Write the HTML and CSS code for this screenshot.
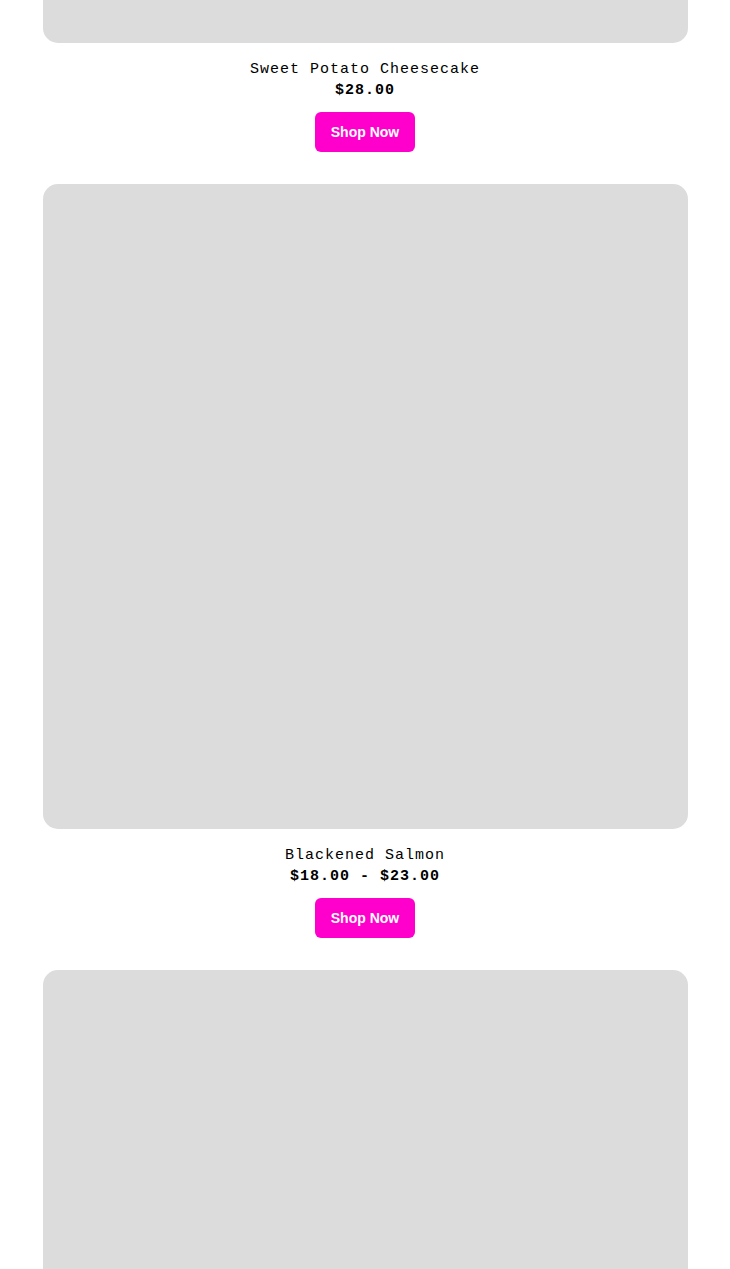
FILE: index.html
```html
<!DOCTYPE html>
<html lang="en">
<head>
  <meta charset="UTF-8">
  <meta name="viewport" content="width=device-width, initial-scale=1.0">
  <title>Menu</title>
  <link rel="stylesheet" href="styles.css">
</head>
<body>

  <div class="products">
    <div class="product">
      <div class="product-img"></div>
      <div class="product-name">Sweet Potato Cheesecake</div>
      <div class="product-price">$28.00</div>
      <a class="shop-btn" href="#">Shop Now</a>
    </div>

    <div class="product">
      <div class="product-img"></div>
      <div class="product-name">Blackened Salmon</div>
      <div class="product-price">$18.00 - $23.00</div>
      <a class="shop-btn" href="#">Shop Now</a>
    </div>

    <div class="product">
      <div class="product-img"></div>
    </div>
  </div>

</body>
</html>
```

FILE: styles.css
```css
* {
  box-sizing: border-box;
  margin: 0;
  padding: 0;
}
body {
  background: #fff;
  color: #000;
  font-family: "Liberation Mono", "Courier New", monospace;
  overflow: hidden;
}
.products {
  width: 645px;
  margin: -602px auto 0;
  display: flex;
  flex-direction: column;
}
.product {
  display: flex;
  flex-direction: column;
  align-items: center;
  margin-bottom: 32px;
}
.product-img {
  width: 645px;
  height: 645px;
  background: #dcdcdc;
  border-radius: 15px;
}
.product-name {
  margin-top: 17px;
  font-size: 15px;
  line-height: 20px;
  letter-spacing: 1px;
}
.product-price {
  font-size: 15px;
  line-height: 21px;
  letter-spacing: 1px;
  font-weight: bold;
}
.shop-btn {
  margin-top: 11px;
  width: 100px;
  height: 40px;
  display: flex;
  align-items: center;
  justify-content: center;
  background: #ff00cc;
  color: #fff;
  border-radius: 6px;
  font: bold 14px "Liberation Sans", Arial, sans-serif;
  text-decoration: none;
}
```
